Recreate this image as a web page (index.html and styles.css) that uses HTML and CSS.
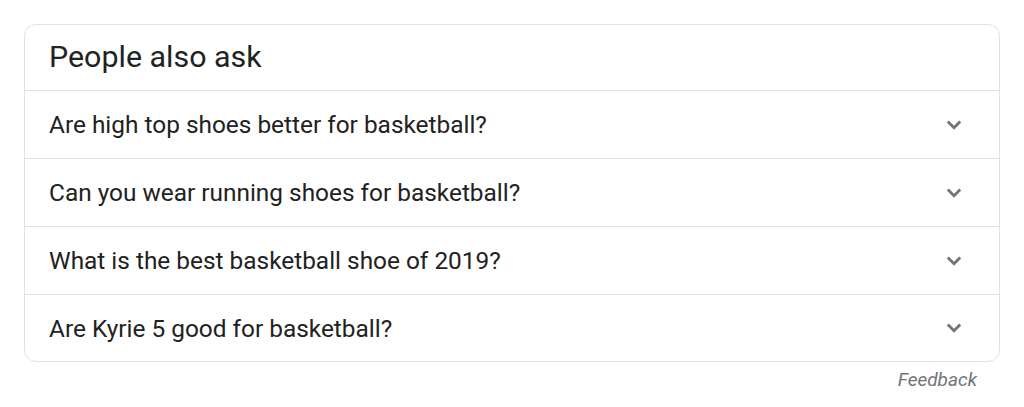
FILE: index.html
```html
<!DOCTYPE html>
<html>
<head>
<meta charset="utf-8">
<link rel="stylesheet" href="styles.css">
</head>
<body>
<div class="wrap">
  <div class="card">
    <div class="head">People also ask</div>
    <div class="row"><span class="q">Are high top shoes better for basketball?</span><svg class="chev" viewBox="0 0 16 12" width="16" height="12"><path d="M1.8 2.5 L8 8.7 L14.2 2.5" fill="none" stroke="#70757a" stroke-width="2.8"/></svg></div>
    <div class="row"><span class="q">Can you wear running shoes for basketball?</span><svg class="chev" viewBox="0 0 16 12" width="16" height="12"><path d="M1.8 2.5 L8 8.7 L14.2 2.5" fill="none" stroke="#70757a" stroke-width="2.8"/></svg></div>
    <div class="row"><span class="q">What is the best basketball shoe of 2019?</span><svg class="chev" viewBox="0 0 16 12" width="16" height="12"><path d="M1.8 2.5 L8 8.7 L14.2 2.5" fill="none" stroke="#70757a" stroke-width="2.8"/></svg></div>
    <div class="row"><span class="q">Are Kyrie 5 good for basketball?</span><svg class="chev" viewBox="0 0 16 12" width="16" height="12"><path d="M1.8 2.5 L8 8.7 L14.2 2.5" fill="none" stroke="#70757a" stroke-width="2.8"/></svg></div>
  </div>
  <div class="feedback">Feedback</div>
</div>
</body>
</html>
```
FILE: styles.css
```css
html, body { margin: 0; padding: 0; background: #fff; }
body { font-family: Roboto, "Liberation Sans", Arial, sans-serif; color: #222; }
.wrap { padding: 24px 24px 0 24px; width: 976px; }
.card {
  border: 1px solid #dfe1e5;
  border-radius: 12px;
  box-sizing: border-box;
  overflow: hidden;
}
.head {
  height: 66px;
  box-sizing: border-box;
  padding: 0 0 0 24px;
  font-size: 30.4px;
  line-height: 64px;
  border-bottom: 1px solid #dfe1e5;
}
.row {
  height: 68px;
  box-sizing: border-box;
  display: flex;
  align-items: center;
  justify-content: space-between;
  padding: 0 37px 0 24px;
  border-bottom: 1px solid #dfe1e5;
  font-size: 24.4px;
}
.row:last-child { border-bottom: none; height: 66px; }
.chev { display: block; }
.feedback {
  text-align: right;
  padding-right: 23px;
  margin-top: 6px;
  font-style: italic;
  font-size: 19px;
  color: #70757a;
}
```
